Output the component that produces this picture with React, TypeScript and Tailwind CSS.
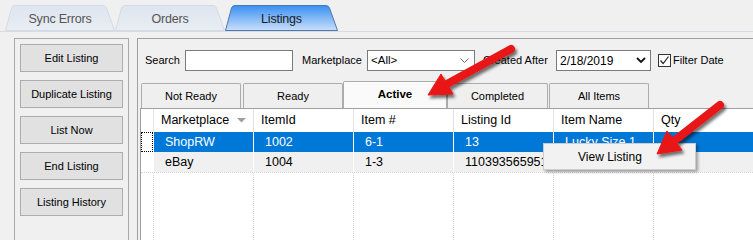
import React from 'react';

const TopTab: React.FC<{ label: string; w: number; active?: boolean }> = ({ label, w, active }) => {
  const d = `M0.5,25.5 L6.5,3 Q7.3,0.5 10,0.5 L${w - 12},0.5 Q${w - 9.5},0.5 ${w - 8.5},3 L${w - 0.5},25.5 Z`;
  return (
    <div className={`relative h-[26px] flex items-center justify-center ${w === 113 ? 'w-[113px]' : 'w-[110px]'}`}>
      <svg className="absolute inset-0" width={w} height={26}>
        <defs>
          <linearGradient id="tabOff" x1="0" y1="0" x2="0" y2="1">
            <stop offset="0" stopColor="#dde5ef" />
            <stop offset="1" stopColor="#e9edf3" />
          </linearGradient>
          <linearGradient id="tabOn" x1="0" y1="0" x2="0" y2="1">
            <stop offset="0" stopColor="#3a90f2" />
            <stop offset="1" stopColor="#c9dffa" />
          </linearGradient>
        </defs>
        <path d={d} fill={active ? 'url(#tabOn)' : 'url(#tabOff)'} stroke={active ? '#4f78ad' : '#d3dbe6'} />
      </svg>
      <span className={`relative pt-[2px] text-[12.5px] tracking-[-0.2px] ${active ? 'text-[#1a1a1a]' : 'text-[#555]'}`}>
        {label}
      </span>
    </div>
  );
};

const SideButton: React.FC<{ label: string }> = ({ label }) => (
  <div className="w-[103px] h-[28px] border border-[#adadad] bg-[#e1e1e1] flex items-center justify-center text-[11px] text-black">
    {label}
  </div>
);

const SubTab: React.FC<{ label: string; className: string; active?: boolean }> = ({ label, className, active }) => (
  <div
    className={`${className} border border-b-0 border-[#acacac] rounded-t-[2px] flex items-center justify-center ${
      active ? 'h-[27px] bg-[#fafafa] font-bold text-[11.5px]' : 'h-[25px] bg-[#efefef] text-[11px]'
    }`}
  >
    {label}
  </div>
);

const cols = ['Marketplace', 'ItemId', 'Item #', 'Listing Id', 'Item Name', 'Qty'];
// row 2's name / qty sit under the context menu, so they stay blank
const rows = [
  ['ShopRW', '1002', '6-1', '13', 'Lucky Size 1', '1'],
  ['eBay', '1004', '1-3', '110393565951', '', ''],
];

export default function App() {
  return (
    <div className="relative w-[753px] h-[240px] overflow-hidden bg-[#f0f0f0] font-['Liberation_Sans',Arial,sans-serif] text-black">
      {/* top tabs */}
      <div className="h-[32px] border-b border-[#d5dce6] flex items-end pl-[5px]">
        <TopTab label="Sync Errors" w={110} />
        <TopTab label="Orders" w={110} />
        <TopTab label="Listings" w={113} active />
      </div>

      <div className="flex mt-[6px]">
        {/* left button panel */}
        <div className="ml-[14px] w-[115px] h-[210px] border border-[#a9a9a9] flex flex-col gap-2 pt-[5px] pl-[5px]">
          <SideButton label="Edit Listing" />
          <SideButton label="Duplicate Listing" />
          <SideButton label="List Now" />
          <SideButton label="End Listing" />
          <SideButton label="Listing History" />
        </div>

        {/* right panel */}
        <div className="ml-[8px] flex-1 h-[210px] border-t border-l border-[#a0a0a0] flex flex-col">
          <div className="mt-[11px] h-[21px] flex items-center pl-[7px] text-[11px]">
            <span className="w-[40px]">Search</span>
            <div className="w-[108px] h-[21px] border border-[#7a7a7a] bg-white" />
            <span className="ml-[9px] w-[65px]">Marketplace</span>
            <div className="w-[108px] h-[21px] border border-[#7a7a7a] bg-white flex items-center justify-between pl-[3px] pr-[5px]">
              <span className="text-[11.5px]">&lt;All&gt;</span>
              <svg width="9" height="6" viewBox="0 0 9 6">
                <polyline points="0.5,0.5 4.5,4.5 8.5,0.5" fill="none" stroke="#666" strokeWidth="1" />
              </svg>
            </div>
            <span className="ml-[8px] w-[73px]">Created After</span>
            <div className="w-[95px] h-[21px] border border-[#7a7a7a] bg-white flex items-center justify-between pl-[3px] pr-[4px]">
              <span className="text-[12px]">2/18/2019</span>
              <svg width="10" height="7" viewBox="0 0 10 7">
                <polyline points="1,1 5,5 9,1" fill="none" stroke="#111" strokeWidth="1.8" />
              </svg>
            </div>
            <div className="ml-[7px] w-[13px] h-[13px] border border-[#333] bg-white flex items-center justify-center">
              <svg width="11" height="11" viewBox="0 0 11 11">
                <polyline points="1.5,5.5 4.2,8.5 9.5,1.5" fill="none" stroke="#222" strokeWidth="1.2" />
              </svg>
            </div>
            <span className="ml-[2px]">Filter Date</span>
          </div>

          {/* sub tabs */}
          <div className="mt-[10px] h-[27px] flex items-end pl-[3px]">
            <SubTab label="Not Ready" className="w-[100px]" />
            <SubTab label="Ready" className="ml-[2px] w-[100px]" />
            <SubTab label="Active" className="w-[104px]" active />
            <SubTab label="Completed" className="w-[101px]" />
            <SubTab label="All Items" className="ml-[1px] w-[100px]" />
          </div>

          {/* grid */}
          <div className="ml-[2px] flex-1 border-t border-l border-[#a0a0a0] bg-white flex flex-col text-[12.5px]">
            <div className="h-[23px] flex">
              <div className="w-[12px]" />
              {cols.map((c, i) => (
                <div
                  key={c}
                  className={`${i === 5 ? 'flex-1' : 'w-[100px]'} border-l border-[#e3e3e3] flex items-center pl-[7px]`}
                >
                  {c}
                  {i === 0 && (
                    <svg className="ml-[8px]" width="9" height="5" viewBox="0 0 9 5">
                      <polygon points="0,0 9,0 4.5,4.5" fill="#a0a0a0" />
                    </svg>
                  )}
                </div>
              ))}
            </div>
            {rows.map((r, ri) => (
              <div key={ri} className={`h-[20px] flex ${ri === 0 ? 'bg-[#0078d7] text-white' : 'bg-[#f0f0f0]'}`}>
                <div className="w-[12px] bg-white">
                  {ri === 0 && <div className="w-[12px] h-[20px] border border-dotted border-black" />}
                </div>
                {r.map((v, i) => (
                  <div
                    key={i}
                    className={`${i === 5 ? 'flex-1' : 'w-[100px]'} border-l border-white flex items-center pl-[11px] overflow-hidden whitespace-nowrap`}
                  >
                    {v}
                  </div>
                ))}
              </div>
            ))}
            <div className="flex-1 flex border-t border-dotted border-[#d6d6d6]">
              <div className="w-[12px]" />
              {cols.map((c, i) => (
                <div key={c} className={`${i === 5 ? 'flex-1' : 'w-[100px]'} border-l border-dotted border-[#d6d6d6]`} />
              ))}
            </div>
          </div>
        </div>
      </div>

      {/* context menu */}
      <div className="absolute left-[543px] top-[143px] w-[153px] h-[27px] bg-[#f2f2f2] border border-[#cccccc] shadow-[2px_2px_3px_rgba(0,0,0,0.35)] flex items-center pl-[34px] text-[12px]">
        View Listing
      </div>

      {/* annotation arrows */}
      <svg className="absolute inset-0 pointer-events-none" width="753" height="240">
        <defs>
          <filter id="sh" x="-20%" y="-20%" width="140%" height="140%">
            <feDropShadow dx="2" dy="3" stdDeviation="1.6" floodColor="#000" floodOpacity="0.55" />
          </filter>
        </defs>
        <g filter="url(#sh)" fill="#e81414" stroke="#e81414">
          <line x1="511" y1="49" x2="447" y2="84" strokeWidth="8" strokeLinecap="round" />
          <polygon points="428,95 453,94 441,74" strokeWidth="1" strokeLinejoin="round" />
          <line x1="720" y1="105" x2="674" y2="141" strokeWidth="8" strokeLinecap="round" />
          <polygon points="657,154 682,150 667,131" strokeWidth="1" strokeLinejoin="round" />
        </g>
      </svg>
    </div>
  );
}
